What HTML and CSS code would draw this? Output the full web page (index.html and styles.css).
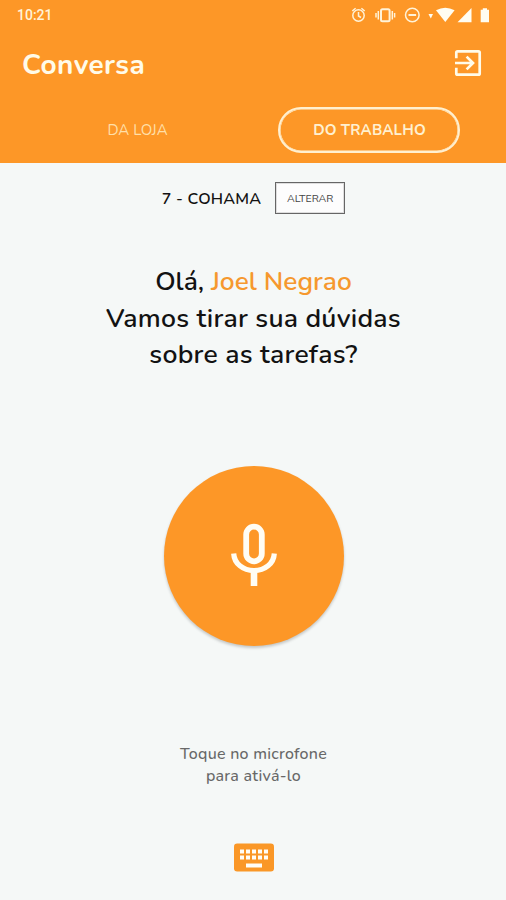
FILE: index.html
```html
<!DOCTYPE html>
<html lang="pt-BR">
<head>
<meta charset="utf-8">
<title>Conversa</title>
<link rel="stylesheet" href="styles.css">
</head>
<body>
<header class="header">
  <div class="status">
    <span class="clock">10:21</span>
    <svg class="status-icons" width="136" height="18" viewBox="355 6 136 18" fill="none" stroke="#fff3d8" stroke-width="1.5">
      <circle cx="358.5" cy="15.5" r="5.7"/>
      <path d="M358.5 12v4l2.5 1.5M352.3 11l3.3-2.8M364.7 11l-3.3-2.8"/>
      <rect x="381" y="9.2" width="8.6" height="12" rx="1.5" stroke-width="2"/>
      <path d="M378.3 11v8.5M392.3 11v8.5M376 13v4.5M394.6 13v4.5"/>
      <circle cx="412.3" cy="15" r="6.8"/>
      <path d="M408.5 15h7.6" stroke-width="2"/>
      <g fill="#fffdf2" stroke="none">
        <path d="M428.5 14h4.5l-2.2 4.5z"/>
        <path d="M436 10.2q9.2-5 18.6 0L445.3 22z"/>
        <path d="M457.5 22.2L471.5 8v14.2z"/>
        <path d="M482.8 8.2h4.2v1.6h2v12.5h-8.3V9.8h2.1z"/>
      </g>
    </svg>
  </div>
  <div class="titlebar">
    <h1 class="title">Conversa</h1>
    <svg class="exit" width="28" height="28" viewBox="0 0 28 28" fill="none" stroke="#fffbe9" stroke-width="2.7">
      <path d="M2.3 9.2V3.6Q2.3 2.3 3.6 2.3H24.4Q25.7 2.3 25.7 3.6V24.4Q25.7 25.7 24.4 25.7H3.6Q2.3 25.7 2.3 24.4V18.8M1 14H19M12.6 7.6L19 14L12.6 20.4"/>
    </svg>
  </div>
  <nav class="tabs">
    <span class="tab">DA LOJA</span>
    <span class="tab tab-active">DO TRABALHO</span>
  </nav>
</header>
<main class="content">
  <div class="store">
    <span class="store-name">7 - COHAMA</span>
    <button class="change">ALTERAR</button>
  </div>
  <div class="greeting">
    <div class="hello">Olá, <span class="name">Joel Negrao</span></div>
    <div class="line-two">Vamos tirar sua dúvidas</div>
    <div class="line-three">sobre as tarefas?</div>
  </div>
  <button class="mic" aria-label="Microfone">
    <svg width="48" height="64" viewBox="0 0 48 64" fill="none" stroke="#fffdf4">
      <rect x="16.2" y="3.7" width="15.6" height="34.6" rx="7.8" stroke-width="5.8"/>
      <path d="M3.7 30.5C4.2 40.5 13 47.7 24 47.7S43.8 40.5 44.3 30.5" stroke-width="5.2"/>
      <path d="M24 48V63" stroke-width="6.6"/>
    </svg>
  </button>
  <div class="hint">
    <div class="hint-one">Toque no microfone</div>
    <div class="hint-two">para ativá-lo</div>
  </div>
  <svg class="keyboard" width="40" height="29" viewBox="0 0 40 29">
    <rect x="0" y="0.5" width="40" height="28" rx="3.2" fill="#fa9727"/>
    <g fill="#fffdf7">
      <path d="M6 6.5h4v4h-4zM12 6.5h4v4h-4zM18 6.5h4v4h-4zM24 6.5h4v4h-4zM30 6.5h4v4h-4z"/>
      <path d="M6 12.5h4v4h-4zM12 12.5h4v4h-4zM18 12.5h4v4h-4zM24 12.5h4v4h-4zM30 12.5h4v4h-4z"/>
      <path d="M12 20.5h16v4H12z"/>
    </g>
  </svg>
</main>
</body>
</html>
```
FILE: styles.css
```css
* { box-sizing: border-box; }
body {
  margin: 0;
  width: 506px;
  height: 900px;
  overflow: hidden;
  background: #f5f8f7;
  font-family: Nunito, "Noto Sans", sans-serif;
  color: #121212;
}
.header { height: 163px; background: #fd9727; color: #fffbe9; }
.status {
  display: flex;
  justify-content: space-between;
  height: 30px;
  padding: 6px 15px 0 17px;
}
.clock { font: 500 14px/19px Roboto, sans-serif; color: #fff3d8; }
.status-icons { overflow: visible; }
.titlebar {
  display: flex;
  justify-content: space-between;
  align-items: center;
  height: 66px;
  padding: 0 24px 0 22px;
}
.title { margin: 4px 0 0; font-size: 28px; line-height: 36px; font-weight: 700; letter-spacing: 0.4px; }
.exit { margin-bottom: 1px; }
.tabs { display: flex; padding: 11px 0 0 46px; }
.tab {
  width: 182px;
  height: 46px;
  line-height: 46px;
  text-align: center;
  font-size: 15px;
  padding-left: 1px;
  color: #ffdfa8;
}
.tab-active {
  margin-left: 50px;
  border: 2px solid #fff0d0;
  box-shadow: inset 0 0 0 0.6px #fff0d0;
  border-radius: 23px;
  line-height: 43px;
  font-weight: 700;
  letter-spacing: 0.15px;
  color: #fff0d0;
}
.content { display: flex; flex-direction: column; align-items: center; padding-left: 1px; }
.store { display: flex; align-items: center; gap: 14px; margin-top: 19px; height: 32px; }
.store-name { padding-top: 1px; font-size: 16px; font-weight: 600; letter-spacing: 0.2px; white-space: nowrap; }
.change {
  width: 70px;
  height: 32px;
  padding: 1px 0 0;
  border: 1px solid #666;
  outline: 1px solid rgba(100, 100, 100, 0.2);
  outline-offset: -2px;
  background: #fdfdfd;
  color: #444;
  font: 400 10.6px/29px Nunito, "Noto Sans", sans-serif;
}
.greeting { margin-top: 49px; text-align: center; font-size: 26.5px; line-height: 36.5px; font-weight: 600; letter-spacing: 0.25px; white-space: nowrap; }
.hello { font-size: 26.3px; letter-spacing: 0; }
.name { color: #f6982e; }
.mic {
  display: flex;
  align-items: center;
  justify-content: center;
  width: 180px;
  height: 180px;
  margin-top: 93px;
  padding: 0 0 2px;
  border: 0;
  border-radius: 50%;
  background: #fd9727;
  box-shadow: 0 2px 3px rgba(0, 0, 0, 0.2);
}
.hint { margin-top: 97px; text-align: center; font-size: 16px; line-height: 22px; font-weight: 500; letter-spacing: 0.25px; color: #686868; }
.keyboard { margin-top: 56px; }
```
